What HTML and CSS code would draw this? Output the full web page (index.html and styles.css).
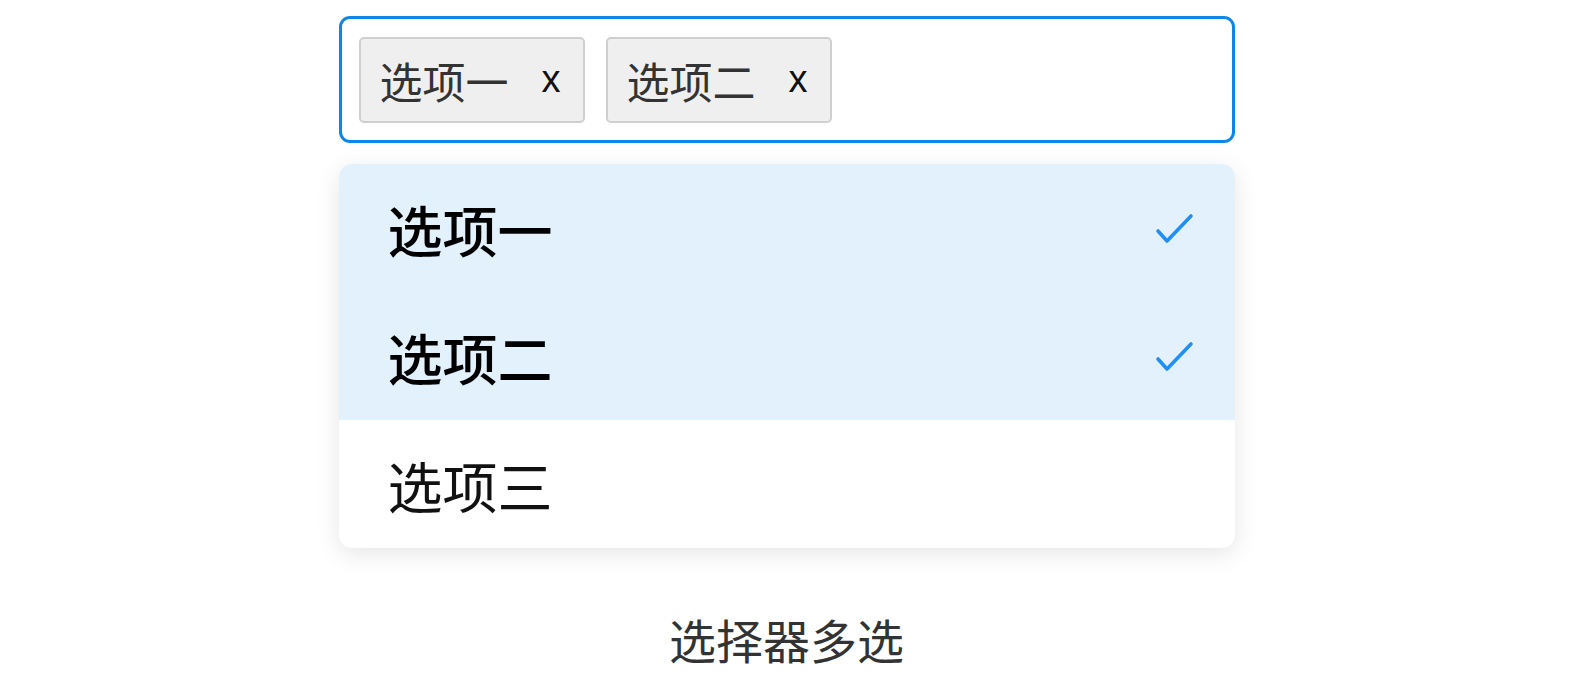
FILE: index.html
```html
<!DOCTYPE html>
<html lang="zh-CN">
<head>
    <meta charset="UTF-8">
    <title>选择器多选</title>
    <link rel="stylesheet" href="styles.css">
</head>
<body>
<div class="demo">
    <div class="select">
        <span class="tag">选项一<i class="tag-close">x</i></span>
        <span class="tag">选项二<i class="tag-close">x</i></span>
    </div>
    <ul class="dropdown">
        <li class="option selected">
            <span>选项一</span>
            <svg class="check" width="40" height="34" viewBox="0 0 40 34"><path d="M3 18 L12 28 L36 3" fill="none" stroke="#2290f2" stroke-width="3.6" stroke-linecap="round" stroke-linejoin="round"/></svg>
        </li>
        <li class="option selected">
            <span>选项二</span>
            <svg class="check" width="40" height="34" viewBox="0 0 40 34"><path d="M3 18 L12 28 L36 3" fill="none" stroke="#2290f2" stroke-width="3.6" stroke-linecap="round" stroke-linejoin="round"/></svg>
        </li>
        <li class="option">
            <span>选项三</span>
        </li>
    </ul>
    <p class="caption">选择器多选</p>
</div>
</body>
</html>
```

FILE: styles.css
```css
@charset "UTF-8";
/* reset */
body,ul,li,p{margin:0;padding:0}
ul{list-style:none}
body{
    font-family: "Noto Sans CJK SC", "Noto Sans", sans-serif;
    color: #333;
    background: #fff;
}

.demo{
    width: 896px;
    margin: 16px auto 0;
}

/* input box */
.select{
    height: 127px;
    box-sizing: border-box;
    border: 3px solid #0d86ea;
    border-radius: 11px;
    padding: 0 17px;
    display: flex;
    align-items: center;
    gap: 21px;
}
.tag{
    height: 86px;
    box-sizing: border-box;
    display: flex;
    align-items: center;
    padding: 0 22px 0 19px;
    background: #efefef;
    border: 2px solid #cfcfcf;
    border-radius: 5px;
    font-size: 43px;
    color: #333;
}
.tag-close{
    font-style: normal;
    font-family: "Liberation Sans", sans-serif;
    font-size: 38px;
    color: #111;
    margin-left: 33px;
}

/* dropdown */
.dropdown{
    margin-top: 21px;
    background: #fff;
    border-radius: 13px;
    overflow: hidden;
    box-shadow: 0 6px 24px rgba(0,0,0,.1);
}
.option{
    height: 128px;
    display: flex;
    align-items: center;
    justify-content: space-between;
    padding: 0 40px 0 49px;
    font-size: 55px;
    color: #111;
}
.option.selected{
    background: #e3f1fd;
    font-weight: 500;
    color: #000;
}
.check{
    display: block;
    margin-top: 4px;
}

.caption{
    margin-top: 58px;
    text-align: center;
    font-size: 47px;
    line-height: 66px;
    color: #333;
}
```
